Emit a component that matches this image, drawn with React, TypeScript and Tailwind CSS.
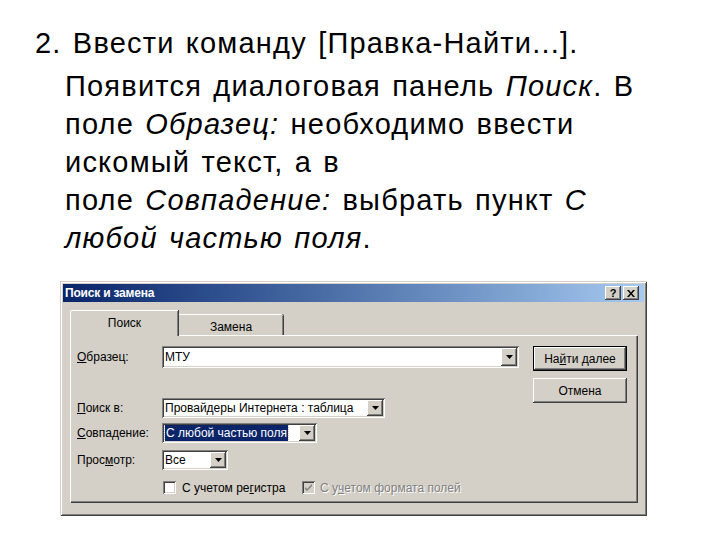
import React from 'react';

const raised =
  'shadow-[inset_-1px_-1px_#404040,inset_1px_1px_#ffffff,inset_-2px_-2px_#808080,inset_2px_2px_#d4d0c8]';
const sunken =
  'shadow-[inset_1px_1px_#808080,inset_-1px_-1px_#ffffff,inset_2px_2px_#404040,inset_-2px_-2px_#d4d0c8]';

function Arrow() {
  return (
    <div className={`w-[16px] h-full bg-[#d4d0c8] ${raised} flex items-center justify-center`}>
      <svg width="7" height="4" viewBox="0 0 7 4">
        <path d="M0 0h7L3.5 4z" fill="#000" />
      </svg>
    </div>
  );
}

function Combo({ width, children }: { width: string; children: React.ReactNode }) {
  return (
    <div className={`${width} h-[20px] bg-white ${sunken} p-[2px] flex`}>
      <div className="flex-1 flex items-center pl-[1px] overflow-hidden whitespace-nowrap">{children}</div>
      <Arrow />
    </div>
  );
}

function Label({ children }: { children: React.ReactNode }) {
  return <div className="w-[85px] shrink-0 whitespace-nowrap">{children}</div>;
}

function Checkbox({ checked, disabled }: { checked?: boolean; disabled?: boolean }) {
  return (
    <div
      className={`w-[13px] h-[13px] ${disabled ? 'bg-[#d4d0c8]' : 'bg-white'} ${sunken} flex items-center justify-center`}
    >
      {checked && (
        <svg width="7" height="7" viewBox="0 0 7 7">
          <path d="M0 3l2 2 5-5v2L2 7 0 5z" fill="#808080" />
        </svg>
      )}
    </div>
  );
}

export default function App() {
  return (
    <div className="w-[720px] h-[540px] bg-white overflow-hidden font-['Liberation_Sans',Arial,sans-serif] text-black">
      <div className="pt-[24px] pl-[35px] text-[29px] tracking-[1.2px] [word-spacing:2px] leading-[38px] whitespace-nowrap">
        <div className="mb-[5px]">2. Ввести команду [Правка-Найти...].</div>
        <div className="pl-[30px]">
          <div>
            Появится диалоговая панель <i>Поиск</i>. В
          </div>
          <div>
            поле <i>Образец:</i> необходимо ввести
          </div>
          <div>искомый текст, а в</div>
          <div>
            поле <i>Совпадение:</i> выбрать пункт <i>С</i>
          </div>
          <div>
            <i>любой частью поля</i>.
          </div>
        </div>
      </div>

      <div
        className={`ml-[60px] mt-[24px] w-[587px] bg-[#d4d0c8] p-[3px] shadow-[inset_1px_1px_#d4d0c8,inset_-1px_-1px_#404040,inset_2px_2px_#ffffff,inset_-2px_-2px_#808080] text-[12px] leading-none`}
      >
        <div className="h-[18px] bg-gradient-to-r from-[#0a246a] to-[#a6caf0] flex items-center pl-[2px] pr-[5px]">
          <span className="text-white font-bold text-[12px] tracking-[-0.2px]">Поиск и замена</span>
          <div className="ml-auto flex gap-[2px]">
            <div className={`w-[16px] h-[14px] bg-[#d4d0c8] ${raised} flex items-center justify-center font-bold text-[11px]`}>
              ?
            </div>
            <div className={`w-[16px] h-[14px] bg-[#d4d0c8] ${raised} flex items-center justify-center`}>
              <svg width="8" height="7" viewBox="0 0 8 7">
                <path d="M0 0h2l2 2.5L6 0h2L5 3.5 8 7H6L4 4.5 2 7H0l3-3.5z" fill="#000" />
              </svg>
            </div>
          </div>
        </div>

        <div className="pt-[8px] px-[7px] pb-[11px]">
          <div className="flex items-end h-[25px]">
            <div className="relative z-10 w-[108px] h-[26px] -mb-[1px] bg-[#d4d0c8] border-t border-l border-white rounded-tl-[2px] shadow-[inset_-1px_0_#808080,1px_0_#404040] flex justify-center pt-[6px]">
              Поиск
            </div>
            <div className="w-[104px] h-[21px] bg-[#d4d0c8] border-t border-white rounded-tr-[2px] shadow-[inset_-1px_0_#808080,1px_0_#404040] flex justify-center pt-[6px] ml-[1px]">
              Замена
            </div>
          </div>

          <div className="h-[167px] bg-[#d4d0c8] border-t border-l border-white shadow-[inset_-1px_-1px_#808080,1px_1px_#404040] flex pt-[10px] pl-[6px] pr-[10px]">
            <div className="flex-1 flex flex-col">
              <div className="flex items-center h-[22px]">
                <Label>
                  <u>О</u>бразец:
                </Label>
                <div className={`w-[357px] h-[22px] bg-white ${sunken} p-[2px] flex`}>
                  <div className="flex-1 flex items-center pl-[1px]">МТУ</div>
                  <Arrow />
                </div>
              </div>

              <div className="flex items-center h-[20px] mt-[30px]">
                <Label>
                  <u>П</u>оиск в:
                </Label>
                <Combo width="w-[223px]">Провайдеры Интернета : таблица</Combo>
              </div>

              <div className="flex items-center h-[20px] mt-[5px]">
                <Label>
                  <u>С</u>овпадение:
                </Label>
                <Combo width="w-[155px]">
                  <span className="bg-[#0a246a] text-white px-[1px] py-[2px] outline outline-1 outline-dotted outline-[#d4d0c8]">
                    С любой частью поля
                  </span>
                </Combo>
              </div>

              <div className="flex items-center h-[20px] mt-[7px]">
                <Label>
                  Прос<u>м</u>отр:
                </Label>
                <Combo width="w-[66px]">Все</Combo>
              </div>

              <div className="flex items-center h-[13px] mt-[11px] pl-[86px]">
                <Checkbox />
                <span className="ml-[6px] w-[120px]">
                  С учетом ре<u>г</u>истра
                </span>
                <Checkbox checked disabled />
                <span className="ml-[5px] text-[#808080] [text-shadow:1px_1px_0_#ffffff]">
                  С у<u>ч</u>етом формата полей
                </span>
              </div>
            </div>

            <div className="flex flex-col w-[94px]">
              <div className="h-[25px] border border-black">
                <div className={`h-full bg-[#d4d0c8] ${raised} flex items-center justify-center`}>
                  На<u>й</u>ти далее
                </div>
              </div>
              <div className={`h-[25px] mt-[7px] bg-[#d4d0c8] ${raised} flex items-center justify-center`}>
                Отмена
              </div>
            </div>
          </div>
        </div>
      </div>
    </div>
  );
}
